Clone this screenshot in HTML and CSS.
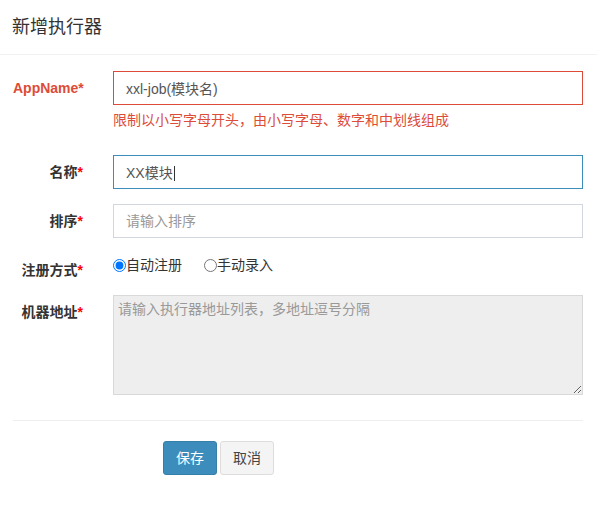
FILE: index.html
```html
<!DOCTYPE html>
<html lang="zh-CN">
<head>
<meta charset="utf-8">
<title>新增执行器</title>
<link rel="stylesheet" href="styles.css">
</head>
<body>
<div class="modal">
  <div class="modal-header">
    <h4 class="modal-title">新增执行器</h4>
  </div>
  <form class="modal-body">
    <div class="form-row has-error">
      <label class="field-label">AppName<span class="req">*</span></label>
      <div class="field">
        <input class="input input-error" type="text" value="xxl-job(模块名)">
        <p class="help">限制以小写字母开头，由小写字母、数字和中划线组成</p>
      </div>
    </div>
    <div class="form-row">
      <label class="field-label">名称<span class="req">*</span></label>
      <div class="field field-focus">
        <input class="input input-focus" type="text" value="XX模块">
        <span class="caret"></span>
      </div>
    </div>
    <div class="form-row">
      <label class="field-label">排序<span class="req">*</span></label>
      <div class="field">
        <input class="input" type="text" placeholder="请输入排序">
      </div>
    </div>
    <div class="form-row">
      <label class="field-label">注册方式<span class="req">*</span></label>
      <div class="field radios">
        <label class="radio"><input type="radio" name="addressType" checked>自动注册</label>
        <label class="radio radio-second"><input type="radio" name="addressType">手动录入</label>
      </div>
    </div>
    <div class="form-row">
      <label class="field-label">机器地址<span class="req">*</span></label>
      <div class="field">
        <textarea class="textarea" readonly placeholder="请输入执行器地址列表，多地址逗号分隔"></textarea>
      </div>
    </div>
    <hr class="divider">
    <div class="actions">
      <button type="button" class="btn btn-primary">保存</button>
      <button type="button" class="btn btn-default">取消</button>
    </div>
  </form>
</div>
</body>
</html>
```

FILE: styles.css
```css
* { box-sizing: border-box; }
html, body {
  margin: 0;
  padding: 0;
  background: #fff;
}
body {
  font-family: "Liberation Sans", "Noto Sans CJK SC", sans-serif;
  font-size: 14px;
  line-height: 20px;
  color: #333;
}
.modal {
  width: 597px;
}
.modal-header {
  padding: 14px 12px;
  border-bottom: 1px solid #f2f2f2;
}
.modal-title {
  margin: 0;
  font-size: 18px;
  line-height: 26px;
  font-weight: normal;
  color: #333;
}
.modal-body {
  margin: 0;
  padding: 16px 14px 0 13px;
}
.form-row {
  display: flex;
  margin-bottom: 15px;
}
.field-label {
  width: 70px;
  flex: none;
  text-align: right;
  padding-top: 7px;
  font-weight: bold;
  color: #333;
  line-height: 20px;
  white-space: nowrap;
}
.req {
  color: #f00;
}
.has-error .field-label,
.has-error .req {
  color: #dd4b39;
}
.field {
  flex: 1;
  margin-left: 30px;
  position: relative;
}
.input {
  display: block;
  width: 100%;
  height: 34px;
  padding: 6px 12px;
  font: inherit;
  line-height: 20px;
  color: #555;
  background: #fff;
  border: 1px solid #d2d6de;
  border-radius: 0;
  outline: none;
}
.input::placeholder {
  color: #999;
}
.input-error {
  border-color: #dd4b39;
}
.input-focus {
  border-color: #3c8dbc;
}
.caret {
  position: absolute;
  left: 61px;
  top: 11px;
  width: 1px;
  height: 15px;
  background: #333;
}
.help {
  margin: 5px 0 10px;
  color: #dd4b39;
  line-height: 20px;
}
.radios {
  display: flex;
  align-items: flex-start;
  padding-top: 2px;
  height: 27px;
  align-self: flex-start;
}
.radio {
  display: flex;
  align-items: center;
  color: #333;
  line-height: 20px;
}
.radio input {
  width: 13px;
  height: 13px;
  margin: 0;
}
.radio-second {
  margin-left: 22px;
}
.textarea {
  display: block;
  width: 100%;
  height: 100px;
  padding: 3px 4px;
  font: inherit;
  line-height: 20px;
  color: #555;
  background: #eee;
  border: 1px solid #d9d9d9;
  border-radius: 0;
  outline: none;
  resize: both;
}
.textarea::placeholder {
  color: #999;
}
.divider {
  margin: 25px 0 20px;
  border: 0;
  border-top: 1px solid #eee;
}
.actions {
  display: flex;
  gap: 3px;
  padding-left: 150px;
}
.btn {
  height: 34px;
  padding: 6px 12px;
  font: inherit;
  line-height: 20px;
  border: 1px solid transparent;
  border-radius: 3px;
  cursor: pointer;
}
.btn-primary {
  background: #3c8dbc;
  border-color: #367fa9;
  color: #fff;
}
.btn-default {
  background: #f4f4f4;
  border-color: #ddd;
  color: #444;
}
```
